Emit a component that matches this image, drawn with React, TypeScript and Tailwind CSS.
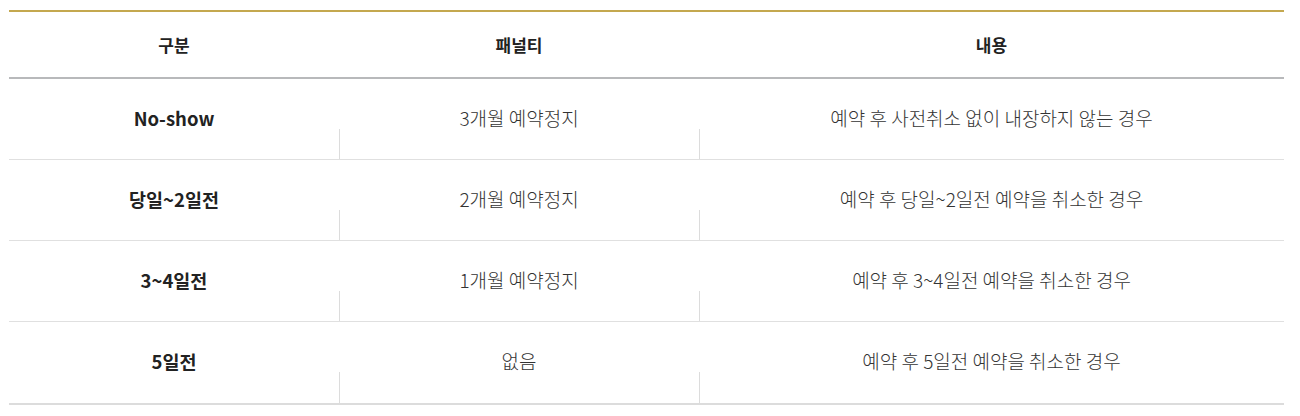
import React from "react";

const rows = [
  ["No-show", "3개월 예약정지", "예약 후 사전취소 없이 내장하지 않는 경우"],
  ["당일~2일전", "2개월 예약정지", "예약 후 당일~2일전 예약을 취소한 경우"],
  ["3~4일전", "1개월 예약정지", "예약 후 3~4일전 예약을 취소한 경우"],
  ["5일전", "없음", "예약 후 5일전 예약을 취소한 경우"],
];

export default function App() {
  return (
    <div
      className="bg-white w-[1300px] h-[416px] pt-[10px] pl-[9px]"
      style={{ fontFamily: '"Noto Sans CJK KR", "Noto Sans", sans-serif' }}
    >
      <div className="w-[1275px] border-t-2 border-[#c4a84f] border-b-2 border-b-[#dcdcdc]">
        <div className="grid grid-cols-[330px_360px_585px] h-[67px] border-b-2 border-[#b8b9bb] text-[17px] font-bold text-[#222]">
          <div className="flex items-center justify-center">구분</div>
          <div className="flex items-center justify-center">패널티</div>
          <div className="flex items-center justify-center">내용</div>
        </div>
        {rows.map((r, i) => (
          <div
            key={i}
            className={`grid grid-cols-[330px_360px_585px] h-[81px] ${i < rows.length - 1 ? "border-b border-[#e0e0e0]" : ""}`}
          >
            <div className="flex flex-col">
              <div className="h-[50px] pt-[28px] leading-[22px] text-center text-[18.5px] font-bold text-[#222] whitespace-nowrap">{r[0]}</div>
            </div>
            <div className="flex flex-col">
              <div className="h-[50px] pt-[28px] leading-[22px] text-center text-[19px] font-light text-[#333] whitespace-nowrap">{r[1]}</div>
              <div className="flex-1 border-l border-[#dcdcdc]" />
            </div>
            <div className="flex flex-col">
              <div className="h-[50px] pt-[28px] leading-[22px] text-center text-[19px] font-light text-[#333] whitespace-nowrap">{r[2]}</div>
              <div className="flex-1 border-l border-[#dcdcdc]" />
            </div>
          </div>
        ))}
      </div>
    </div>
  );
}
